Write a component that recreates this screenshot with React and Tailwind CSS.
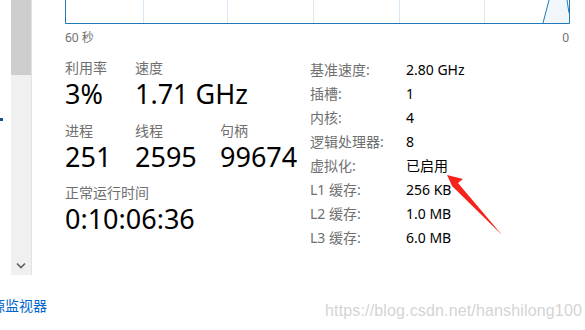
import React from 'react';

const LABEL = 'text-[14px] leading-[22px] text-[#6f6f6f]';
const BIG = 'text-[27px] leading-[30px] text-black';

const specs = [
  ['基准速度:', '2.80 GHz'],
  ['插槽:', '1'],
  ['内核:', '4'],
  ['逻辑处理器:', '8'],
  ['虚拟化:', '已启用'],
  ['L1 缓存:', '256 KB'],
  ['L2 缓存:', '1.0 MB'],
  ['L3 缓存:', '6.0 MB'],
];

const Stat = ({ label, value, width }) => (
  <div className={width}>
    <div className={LABEL}>{label}</div>
    <div className={BIG}>{value}</div>
  </div>
);

const Chart = () => (
  <svg width="505" height="24" viewBox="0 0 505 24" className="block">
    {[78, 162, 248, 334, 419].map((x) => (
      <line key={x} x1={x + 0.5} y1="0" x2={x + 0.5} y2="23" stroke="#d9e8f5" strokeWidth="1" />
    ))}
    <polygon points="478,23 484,0 502,0 504,13 504,23" fill="#f1f6fb" />
    <polyline points="478,23 484,0" fill="none" stroke="#1f7bb5" strokeWidth="1" />
    <polyline points="502,0 504,13" fill="none" stroke="#1f7bb5" strokeWidth="1" />
    <path d="M0.5 0 V23.5 H504.5 V0" fill="none" stroke="#1f7bb5" strokeWidth="1" />
  </svg>
);

export default function App() {
  return (
    <div
      className="relative w-[585px] h-[330px] bg-white overflow-hidden flex"
      style={{ fontFamily: '"Segoe UI", "Noto Sans", "Noto Sans CJK SC", sans-serif' }}
    >
      {/* left edge + scrollbar */}
      <div className="w-[11px] h-[290px] relative">
        <div className="absolute left-0 top-[118px] w-[3px] h-[3px] bg-[#1a4f8a]" />
      </div>
      <div className="w-[21px] h-[275px] bg-[#f0f0f0] border-r border-[#e2e2e2] flex flex-col justify-between">
        <div className="w-[20px] h-[75px] bg-[#cdcdcd]" />
        <div className="h-[20px] flex items-center justify-center text-[#606060]">
          <svg width="10" height="7" viewBox="0 0 10 7">
            <path d="M1 1.5 L5 5.5 L9 1.5" fill="none" stroke="#606060" strokeWidth="1.6" />
          </svg>
        </div>
      </div>

      {/* main */}
      <div className="pl-[33px] flex flex-col">
        <Chart />
        <div className="w-[505px] flex justify-between text-[12px] leading-[16px] text-[#6f6f6f] mt-[6px]">
          <span>60 秒</span>
          <span className="pr-[1px]">0</span>
        </div>

        <div className="flex mt-[11px]">
          <div className="w-[245px] flex flex-col">
            <div className="flex">
              <Stat label="利用率" value="3%" width="w-[70px]" />
              <Stat label="速度" value="1.71 GHz" width="w-[150px]" />
            </div>
            <div className="flex mt-[11px]">
              <Stat label="进程" value="251" width="w-[70px]" />
              <Stat label="线程" value="2595" width="w-[85px]" />
              <Stat label="句柄" value="99674" width="w-[90px]" />
            </div>
            <div className="mt-[10px]">
              <Stat label="正常运行时间" value="0:10:06:36" />
            </div>
          </div>

          <div className="flex flex-col">
            {specs.map(([k, v]) => (
              <div key={k} className="flex h-[24px] items-center text-[14px]">
                <span className="w-[96px] text-[#6f6f6f]">{k}</span>
                <span className="text-black">{v}</span>
              </div>
            ))}
          </div>
        </div>
      </div>

      {/* bottom link + watermark */}
      <div className="absolute left-[-23px] top-[296px] text-[14px] leading-[20px] text-[#0066cc]">资源监视器</div>
      <div
        className="absolute left-[325px] top-[300px] text-[16px] leading-[22px] tracking-[0.15px] text-[#d4d4d4]"
        style={{ fontFamily: '"Liberation Sans", Arial, sans-serif' }}
      >
        https://blog.csdn.net/hanshilong100
      </div>

      {/* red arrow annotation */}
      <svg className="absolute left-0 top-0 pointer-events-none" width="585" height="330">
        <polygon points="447,175 463,179 458,183 502,235 452,186 453,188" fill="#f5231b" />
      </svg>
    </div>
  );
}
